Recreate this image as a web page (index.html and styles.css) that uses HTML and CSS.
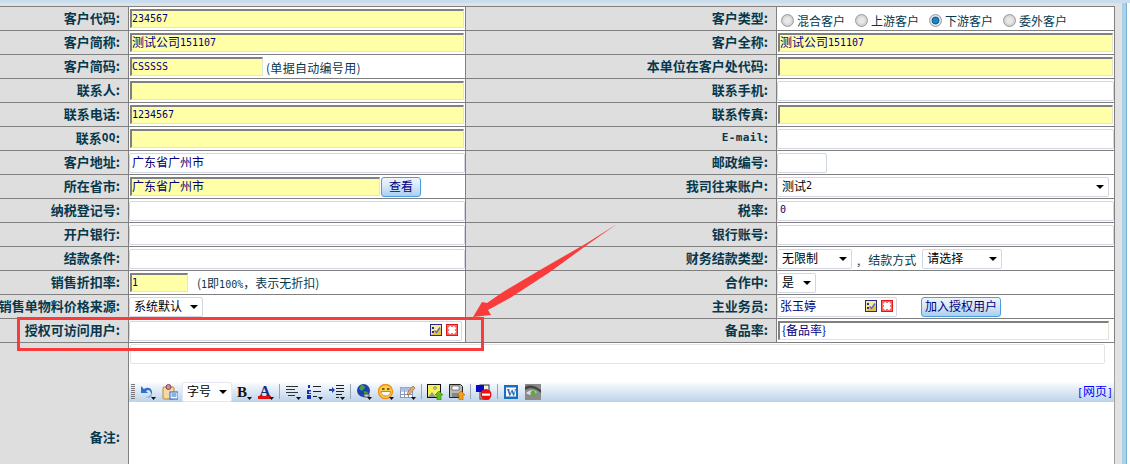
FILE: index.html
```html
<!DOCTYPE html>
<html lang="zh-CN">
<head>
<meta charset="utf-8">
<title>客户资料</title>
<link rel="stylesheet" href="styles.css">
</head>
<body>
<svg class="defs" width="0" height="0">
  <symbol id="pick" viewBox="0 0 12 12">
    <rect x=".5" y=".5" width="11" height="11" fill="#f7e9a0" stroke="#2a2a80"/>
    <path d="M1 11L11 11L11 4Z" fill="#e8c040"/>
    <path d="M2 3h2v2H2zM2 7h2v2H2z" fill="#2a2a90"/>
    <path d="M4.500 6.500l2 2 3.500-5" fill="none" stroke="#5a6ac0" stroke-width="1.400"/>
  </symbol>
  <symbol id="del" viewBox="0 0 12 12">
    <rect x=".5" y=".5" width="11" height="11" fill="#f66" stroke="#e01818"/>
    <path d="M4 2h1v1h2V2h1l2 2v1H9v2h1v1L8 10H7V9H5v1H4L2 8V7h1V5H2V4Z" fill="#fff"/>
  </symbol>
  <symbol id="drop" viewBox="0 0 16 16"><path d="M11 13h5l-2.500 3z" fill="#111"/></symbol>
</svg>

<div class="page">
  <main class="main">
    <div class="row">
      <div class="lbl">客户代码:</div>
      <div class="val"><div class="field yellow grow"><span class="num">234567</span></div></div>
      <div class="lbl">客户类型:</div>
      <div class="val radios">
        <label class="radio"><input type="radio" name="t">混合客户</label>
        <label class="radio"><input type="radio" name="t">上游客户</label>
        <label class="radio"><input type="radio" name="t" checked>下游客户</label>
        <label class="radio"><input type="radio" name="t">委外客户</label>
      </div>
    </div>
    <div class="row">
      <div class="lbl">客户简称:</div>
      <div class="val"><div class="field yellow grow">测试公司<span class="num">151107</span></div></div>
      <div class="lbl">客户全称:</div>
      <div class="val"><div class="field yellow grow">测试公司<span class="num">151107</span></div></div>
    </div>
    <div class="row">
      <div class="lbl">客户简码:</div>
      <div class="val"><div class="field yellow w-code"><span class="num">CSSSSS</span></div><span class="hint hint-code">(单据自动编号用)</span></div>
      <div class="lbl">本单位在客户处代码:</div>
      <div class="val"><div class="field yellow grow"></div></div>
    </div>
    <div class="row">
      <div class="lbl">联系人:</div>
      <div class="val"><div class="field yellow grow"></div></div>
      <div class="lbl">联系手机:</div>
      <div class="val"><div class="field white grow"></div></div>
    </div>
    <div class="row">
      <div class="lbl">联系电话:</div>
      <div class="val"><div class="field yellow grow"><span class="num">1234567</span></div></div>
      <div class="lbl">联系传真:</div>
      <div class="val"><div class="field yellow grow"></div></div>
    </div>
    <div class="row">
      <div class="lbl">联系<span class="lat">QQ</span>:</div>
      <div class="val"><div class="field yellow grow"></div></div>
      <div class="lbl"><span class="lat">E-mail</span>:</div>
      <div class="val"><div class="field white grow"></div></div>
    </div>
    <div class="row">
      <div class="lbl">客户地址:</div>
      <div class="val"><div class="field white grow">广东省广州市</div></div>
      <div class="lbl">邮政编号:</div>
      <div class="val"><div class="field white w-zip"></div></div>
    </div>
    <div class="row">
      <div class="lbl">所在省市:</div>
      <div class="val"><div class="field yellow w-city">广东省广州市</div><button class="btn btn-view" type="button">查看</button></div>
      <div class="lbl">我司往来账户:</div>
      <div class="val"><div class="select w-account">测试<span class="num">2</span></div></div>
    </div>
    <div class="row">
      <div class="lbl">纳税登记号:</div>
      <div class="val"><div class="field white grow"></div></div>
      <div class="lbl">税率:</div>
      <div class="val"><div class="field white grow"><span class="num">0</span></div></div>
    </div>
    <div class="row">
      <div class="lbl">开户银行:</div>
      <div class="val"><div class="field white grow"></div></div>
      <div class="lbl">银行账号:</div>
      <div class="val"><div class="field white grow"></div></div>
    </div>
    <div class="row">
      <div class="lbl">结款条件:</div>
      <div class="val"><div class="field white grow"></div></div>
      <div class="lbl">财务结款类型:</div>
      <div class="val"><div class="select w-limit">无限制</div><span class="hint hint-pay">,<span class="pay-text">结款方式</span></span><div class="select w-pay">请选择</div></div>
    </div>
    <div class="row">
      <div class="lbl">销售折扣率:</div>
      <div class="val"><div class="field yellow w-rate"><span class="num">1</span></div><span class="hint hint-rate">(<span class="num">1</span>即<span class="num">100%</span>，表示无折扣)</span></div>
      <div class="lbl">合作中:</div>
      <div class="val"><div class="select w-yes">是</div></div>
    </div>
    <div class="row">
      <div class="lbl">销售单物料价格来源:</div>
      <div class="val"><div class="select w-source">系统默认</div></div>
      <div class="lbl">主业务员:</div>
      <div class="val"><div class="field white picker w-sales">张玉婷<span class="picks"><svg class="ico12"><use href="#pick"/></svg><svg class="ico12"><use href="#del"/></svg></span></div><button class="btn btn-auth" type="button">加入授权用户</button></div>
    </div>
    <div class="row">
      <div class="lbl">授权可访问用户:</div>
      <div class="val"><div class="field white picker w-users"><span class="picks"><svg class="ico12"><use href="#pick"/></svg><svg class="ico12"><use href="#del"/></svg></span></div></div>
      <div class="lbl">备品率:</div>
      <div class="val"><div class="field inset w-stock">{备品率}</div></div>
    </div>

    <div class="notes">
      <div class="notes-lbl">备注:</div>
      <div class="notes-body">
        <div class="subject"></div>
        <div class="toolbar">
          <span class="grip"></span>
          <span class="tool"><svg width="16" height="16" viewBox="0 0 16 16"><path d="M1 2v7h7L6 7c2-2 4-1 5 2l1 2c1-6-3-9-8-6Z" fill="#2f6fd0"/><path d="M5 13c3 0 5-1 6-3l1 2-3 2z" fill="#7fb0ea"/><use href="#drop"/></svg></span>
          <span class="tool"><svg width="16" height="16" viewBox="0 0 16 16"><rect x="1" y="3" width="11" height="12" rx="1" fill="#f4d9a0" stroke="#b9883c"/><circle cx="6.500" cy="3" r="2.500" fill="#d98a9a" stroke="#8a4050"/><rect x="8" y="8" width="8" height="7" fill="#fff" stroke="#1c62c8"/><path d="M9.500 10h5M9.500 12h5" stroke="#1c62c8"/></svg></span>
          <div class="select tb-size">字号</div>
          <span class="tool"><svg width="16" height="16" viewBox="0 0 16 16"><text x="1" y="12.500" class="svg-b">B</text><use href="#drop"/></svg></span>
          <span class="tool"><svg width="16" height="16" viewBox="0 0 16 16"><text x="1.500" y="12" class="svg-a">A</text><rect x="0" y="12" width="13" height="3" fill="#e01010"/><use href="#drop"/></svg></span>
          <span class="sep"></span>
          <span class="tool"><svg width="16" height="16" viewBox="0 0 16 16"><path d="M1 2.500h12M1 5.500h9M1 8.500h12M3 11.500h7" stroke="#333" fill="none"/><use href="#drop"/></svg></span>
          <span class="tool"><svg width="16" height="16" viewBox="0 0 16 16"><path d="M1 1h2v3H1zM0 6h4v1.500H2V9h2v1H0zM0 11h4v4H0z" fill="#1a2fb0"/><path d="M6 2.500h8M6 7.500h8M6 12.500h4" stroke="#222" fill="none"/><use href="#drop"/></svg></span>
          <span class="tool"><svg width="16" height="16" viewBox="0 0 16 16"><path d="M7 1.500h8M7 4.500h8M7 7.500h8M7 10.500h6M7 13.500h3" stroke="#222" fill="none"/><path d="M0 5h3V3l3 3-3 3V7H0z" fill="#1a3fc0"/><use href="#drop"/></svg></span>
          <span class="sep"></span>
          <span class="tool"><svg width="16" height="16" viewBox="0 0 16 16"><circle cx="7.500" cy="6.500" r="6.500" fill="#1f3fb0"/><path d="M5 1c3 0 4 1 4 3L6 7 3 5zM8 7l4 1-2 4-2-1z" fill="#3aa040"/><rect x="8" y="10" width="5" height="3" fill="#ccc" stroke="#555"/><use href="#drop"/></svg></span>
          <span class="tool"><svg width="16" height="16" viewBox="0 0 16 16"><circle cx="7.500" cy="7.500" r="7" fill="#fbd24e" stroke="#ee8f1e" stroke-width="1.400"/><rect x="4" y="4" width="2.500" height="2" fill="#8a5a10"/><rect x="9" y="4" width="2.500" height="2" fill="#8a5a10"/><path d="M3 7.500h9.500c0 3-2 4.500-4.700 4.500S3 10.500 3 7.500Z" fill="#fff" stroke="#d9821a"/><use href="#drop"/></svg></span>
          <span class="tool"><svg width="16" height="16" viewBox="0 0 16 16"><rect x=".5" y="3.500" width="12" height="10" fill="#fff" stroke="#8a96b8"/><path d="M.5 7h12M.5 10.500h12M4.500 3.500v10M8.500 3.500v10" stroke="#8a96b8"/><path d="M.5 3.500h12v3h-12z" fill="#a8bce8"/><path d="M8 8l5-6 2 2-5 6-3 1z" fill="#e8b070" stroke="#8a5a20" stroke-width=".6"/><use href="#drop"/></svg></span>
          <span class="sep"></span>
          <span class="tool"><svg width="16" height="16" viewBox="0 0 16 16"><rect x=".5" y=".5" width="13" height="13" fill="#f6f25a" stroke="#111"/><path d="M1 13l4-5 4 5z" fill="#999"/><circle cx="8" cy="4" r="1.300" fill="#fff" stroke="#333" stroke-width=".6"/><path d="M12 7l4 4h-2v5h-4v-5H8z" fill="#5fc020" stroke="#2a7a10" stroke-width=".6"/></svg></span>
          <span class="tool"><svg width="16" height="16" viewBox="0 0 16 16"><path d="M.5.500h11l2 2v11H.5z" fill="#b8b8b8" stroke="#222"/><rect x="3" y="2" width="7" height="4" fill="#fff" stroke="#444" stroke-width=".6"/><rect x="3" y="9" width="7" height="4" fill="#888"/><path d="M12 7l4 4h-2v5h-4v-5H8z" fill="#f8a010" stroke="#b06000" stroke-width=".6"/></svg></span>
          <span class="sep"></span>
          <span class="tool"><svg width="16" height="16" viewBox="0 0 16 16"><rect x="4" y="1" width="9" height="14" fill="#eee" stroke="#333"/><rect x="0" y="1" width="8" height="7" fill="#0808c8"/><circle cx="10" cy="10.500" r="5.500" fill="#ee1010"/><rect x="6" y="9.500" width="8" height="2.200" fill="#fff"/></svg></span>
          <span class="sep"></span>
          <span class="tool"><svg width="14" height="14" viewBox="0 0 14 14"><rect width="14" height="14" fill="#1a6fb8"/><rect x="2" y="2.500" width="10" height="9" fill="#fff"/><text x="2.500" y="11" class="svg-w">W</text></svg></span>
          <span class="tool"><svg width="16" height="16" viewBox="0 0 16 16"><rect width="16" height="16" fill="#8a8a8a"/><path d="M0 3c5-3 11-1 16 3v3C11 4 5 3 0 6Z" fill="#444"/><path d="M1 9c3-3 7-4 11-1-3 3-8 4-11 1Z" fill="#ddd"/><circle cx="8" cy="9" r="2.500" fill="#58b038"/></svg></span>
          <a class="mode" href="#"><span class="num">[</span>网页<span class="num">]</span></a>
        </div>
      </div>
    </div>
  </main>
  <div class="side"></div>
</div>

<svg class="mark" width="1130" height="464" viewBox="0 0 1130 464">
  <rect x="18.500" y="318.500" width="464" height="31" fill="none" stroke="#f93b3b" stroke-width="3"/>
  <path d="M617 224L587 243L540 270L503 292L487 303L482 302L473 317L491 315L488 310L510 298L550 272L587 245Z" fill="#f93b3b"/>
</svg>
</body>
</html>
```
FILE: styles.css
```css
* { box-sizing: border-box; }
html, body { margin: 0; padding: 0; }
body {
  width: 1130px;
  height: 464px;
  overflow: hidden;
  position: relative;
  background: #fff;
  border-top: 3px solid #c8deef;
  font: 12px/1 "Noto Sans CJK SC", "Liberation Sans", sans-serif;
}
.defs { position: absolute; }
.page { display: flex; height: 461px; }
.main { width: 1122px; padding-top: 3px; background: #e2e2e2; }
.side { width: 5px; background: #a9d0ea; border-right: 1px solid #7fb0d4; }

.row {
  display: grid;
  grid-template-columns: 129px 337px 311px 338px;
  width: 1115px;
  height: 24px;
  border-top: 1px solid #808080;
  background: #dedede;
}
.lbl {
  display: flex;
  align-items: center;
  justify-content: flex-end;
  padding: 0 8px 3px 0;
  border-right: 1px solid #808080;
  color: #06384c;
  font-size: 13px;
  font-weight: 700;
  white-space: nowrap;
}
.val {
  display: flex;
  align-items: center;
  background: #fff;
  border-right: 1px solid #808080;
}
.lat { font: 700 11px "DejaVu Sans Mono", monospace; letter-spacing: .4px; }
.num { font: 10px "DejaVu Sans Mono", monospace; }

.field {
  display: flex;
  align-items: center;
  height: 19px;
  padding-bottom: 2px;
  color: #000080;
  white-space: nowrap;
}
.grow { flex: 1; }
.yellow, .inset {
  margin-left: 1px;
  border: 1px solid #e4e4d4;
  border-top: 2px solid #808080;
  border-left: 2px solid #808080;
}
.yellow { background: #ffffa8; margin-right: 1px; }
.inset { background: #fff; padding-left: 2px; }
.white { border: 1px solid #d3d7e3; border-radius: 2px; background: #fff; height: 20px; padding-left: 2px; }
.w-code { width: 133px; flex: none; }
.w-zip { width: 50px; }
.w-city { width: 250px; flex: none; margin-right: 1px; }
.w-rate { width: 58px; flex: none; }
.w-stock { width: 331px; }
.w-sales { width: 120px; }
.w-users { width: 333px; }
.picks { display: flex; gap: 4px; margin-left: auto; padding-right: 3px; }
.ico12 { width: 12px; height: 12px; display: block; }

.hint { color: #06384c; white-space: nowrap; padding-top: 2px; }
.hint-code { margin-left: 2px; letter-spacing: .3px; }
.hint-rate { margin-left: 8px; }
.hint-pay { margin: 0 6px 0 5px; }
.pay-text { margin-left: 8px; }

.select {
  position: relative;
  display: flex;
  align-items: center;
  height: 20px;
  padding: 0 0 2px 4px;
  background: #fff;
  border: 1px solid #d3d7e3;
  border-radius: 2px;
  color: #000;
  white-space: nowrap;
}
.select::after {
  content: "";
  position: absolute;
  right: 4px;
  top: 7px;
  border: 4px solid transparent;
  border-top-color: #000;
  border-bottom: 0;
}
.w-account { width: 332px; }
.w-limit { width: 75px; }
.w-pay { width: 80px; }
.w-yes { width: 39px; }
.w-source { width: 74px; }

.btn {
  height: 20px;
  padding: 0 0 2px;
  color: #000080;
  font: inherit;
  background: linear-gradient(#eef5fc, #d9e8f7 45%, #a9cff0);
  border: 1px solid #4a9fe0;
  border-radius: 3px;
}
.btn-view { width: 40px; }
.btn-auth { width: 80px; margin-left: 24px; }

.radios { padding-left: 4px; }
.radio {
  display: flex;
  align-items: center;
  width: 74px;
  color: #06384c;
  padding-top: 4px;
  white-space: nowrap;
}
.radio input {
  appearance: none;
  width: 13px;
  height: 13px;
  margin: 0 3px 0 0;
  border: 1px solid #9a9a9a;
  border-radius: 50%;
  background: radial-gradient(circle, #e8e8e8 30%, #bcbcbc 100%);
}
.radio input:checked {
  background: radial-gradient(circle, #1a86c8 0 32%, #0a4f86 45%, #e8e8e8 55%, #bcbcbc 100%);
}

.notes {
  display: grid;
  grid-template-columns: 129px 986px;
  width: 1115px;
  height: 122px;
  border-top: 1px solid #808080;
}
.notes-lbl {
  display: flex;
  align-items: center;
  justify-content: flex-end;
  padding: 66px 8px 0 0;
  background: #dedede;
  border-right: 1px solid #808080;
  color: #06384c;
  font-size: 13px;
  font-weight: 700;
}
.notes-body { background: #fff; border-right: 1px solid #a0a0a0; padding-top: 1px; }
.subject {
  width: 975px;
  height: 20px;
  margin-left: 1px;
  border: 1px solid #e4e4e4;
  border-radius: 2px;
}
.toolbar {
  display: flex;
  align-items: center;
  height: 21px;
  margin-top: 17px;
  padding-left: 2px;
  padding-right: 1px;
  background: linear-gradient(#fff, #eaf1f9 30%, #bcd2e9);
}
.grip {
  width: 4px;
  height: 15px;
  margin-right: 2px;
  background: repeating-linear-gradient(#777 0 1px, transparent 1px 2px);
}
.tool { display: flex; align-items: center; justify-content: center; width: 22px; height: 16px; }
.sep { width: 1px; height: 15px; margin: 0 2px; background: #9aa4b0; }
.tb-size { width: 50px; margin: 0 1px; border-color: #e4e8f0; }
.mode { margin-left: auto; color: #00f; text-decoration: none; }
.svg-b { font: 700 15px "Liberation Serif", serif; fill: #111; }
.svg-a { font: 700 15px "Liberation Serif", serif; fill: #1a2a80; }
.svg-w { font: 700 10px "Liberation Serif", serif; fill: #1a6fb8; }

.mark { position: absolute; left: 0; top: -3px; pointer-events: none; }
```
